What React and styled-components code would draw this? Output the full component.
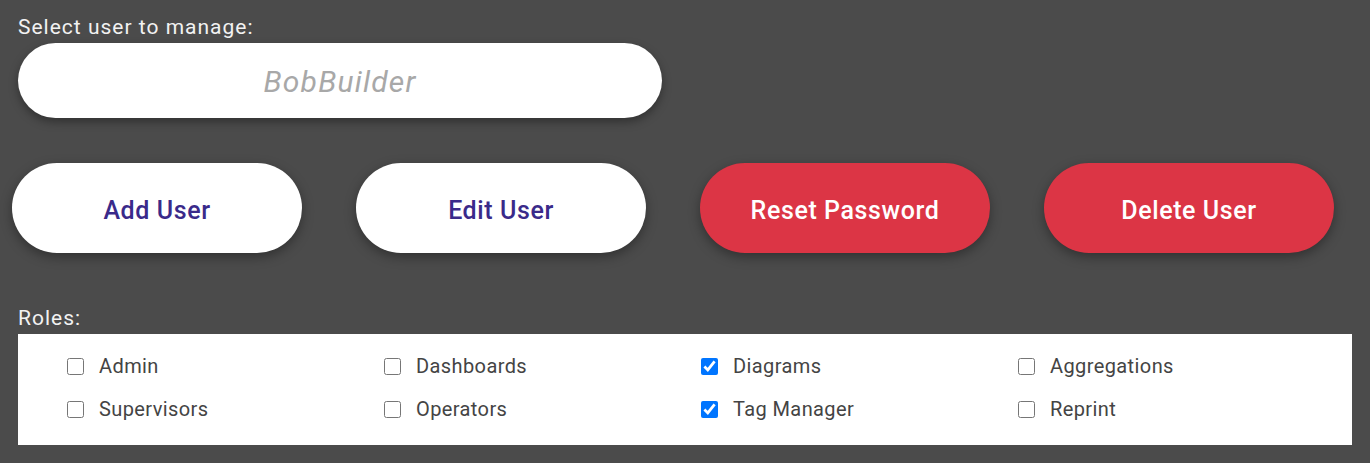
import React from "react";
import styled, { createGlobalStyle } from "styled-components";

const Global = createGlobalStyle`
  html, body { margin: 0; padding: 0; background: #4b4b4b; }
  body { font-family: Roboto, "Noto Sans", sans-serif; }
`;

const Page = styled.div`
  display: flex;
  flex-direction: column;
  align-items: flex-start;
  padding: 15px 18px 18px 18px;
  width: 1370px;
  box-sizing: border-box;
`;

const Label = styled.div`
  color: #f2f2f2;
  font-size: 21px;
  line-height: 25px;
  letter-spacing: 1px;
`;

const UserInput = styled.input`
  margin-top: 3px;
  width: 644px;
  height: 75px;
  box-sizing: border-box;
  border: none;
  border-radius: 38px;
  padding-top: 3px;
  background: #fff;
  box-shadow: 0 4px 10px rgba(0, 0, 0, 0.35);
  text-align: center;
  font-family: Roboto, sans-serif;
  font-size: 30px;
  font-style: italic;
  letter-spacing: 1.2px;
  color: #333;
  outline: none;
  &::placeholder { color: #a8a8a8; font-style: italic; }
`;

const ButtonRow = styled.div`
  display: flex;
  gap: 54px;
  margin-top: 45px;
  margin-left: -6px;
`;

const Button = styled.button`
  width: 290px;
  height: 90px;
  padding: 4px 0 0 0;
  border: none;
  border-radius: 45px;
  background: ${(p) => (p.$danger ? "#dc3545" : "#ffffff")};
  color: ${(p) => (p.$danger ? "#ffffff" : "#3a2a8a")};
  font-family: Roboto, sans-serif;
  font-size: 25px;
  font-weight: 500;
  letter-spacing: 0.6px;
  box-shadow: 0 4px 12px rgba(0, 0, 0, 0.35);
  cursor: pointer;
`;

const RolesLabel = styled(Label)`
  margin-top: 53px;
`;

const RolesPanel = styled.div`
  margin-top: 3px;
  width: 1334px;
  height: 111px;
  box-sizing: border-box;
  background: #fff;
  padding: 21px 0 0 49px;
  display: grid;
  grid-template-columns: repeat(4, 317px);
  grid-auto-rows: 43px;
  align-content: start;
`;

const Role = styled.label`
  display: flex;
  align-items: center;
  gap: 15px;
  height: 22px;
  color: #444;
  font-size: 20px;
  letter-spacing: 0.4px;
`;

const Check = styled.input`
  width: 17px;
  height: 17px;
  margin: 0;
  accent-color: #0075ff;
`;

const roles = [
  ["Admin", false],
  ["Dashboards", false],
  ["Diagrams", true],
  ["Aggregations", false],
  ["Supervisors", false],
  ["Operators", false],
  ["Tag Manager", true],
  ["Reprint", false],
];

export default function App() {
  return (
    <>
      <Global />
      <Page>
        <Label>Select user to manage:</Label>
        <UserInput placeholder="BobBuilder" />
        <ButtonRow>
          <Button>Add User</Button>
          <Button>Edit User</Button>
          <Button $danger>Reset Password</Button>
          <Button $danger>Delete User</Button>
        </ButtonRow>
        <RolesLabel>Roles:</RolesLabel>
        <RolesPanel>
          {roles.map(([name, checked]) => (
            <Role key={name}>
              <Check type="checkbox" defaultChecked={checked} />
              {name}
            </Role>
          ))}
        </RolesPanel>
      </Page>
    </>
  );
}
